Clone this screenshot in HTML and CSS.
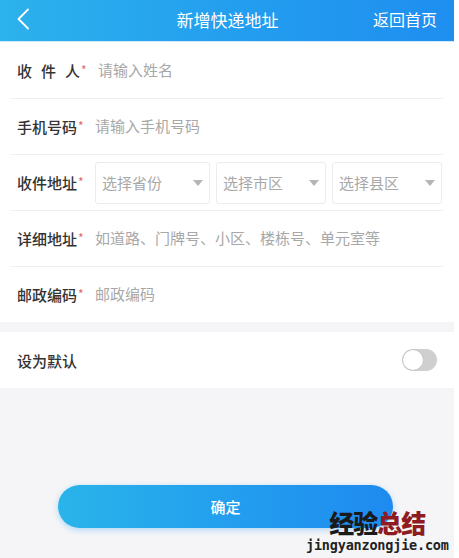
FILE: index.html
```html
<!DOCTYPE html>
<html lang="zh-CN">
<head>
    <meta charset="UTF-8">
    <meta name="viewport" content="width=device-width, initial-scale=1.0">
    <title>新增快递地址</title>
    <link rel="stylesheet" href="styles.css">
</head>
<body>
    <div class="page">
        <header class="topbar">
            <a class="back" href="#">
                <svg width="14" height="22" viewBox="0 0 14 22"><path d="M12 1.5L2.5 11 12 20.5" fill="none" stroke="#fff" stroke-width="1.8" stroke-linecap="round" stroke-linejoin="round"/></svg>
            </a>
            <h1 class="title">新增快递地址</h1>
            <a class="home" href="#">返回首页</a>
        </header>

        <form class="form">
            <div class="row first">
                <label class="label spaced">收件<span class="tight">人</span><i>*</i></label>
                <input class="field" type="text" placeholder="请输入姓名">
            </div>
            <div class="row">
                <label class="label">手机号码<i>*</i></label>
                <input class="field" type="text" placeholder="请输入手机号码">
            </div>
            <div class="row">
                <label class="label">收件地址<i>*</i></label>
                <div class="selects">
                    <div class="select sel-1">选择省份<span class="caret"></span></div>
                    <div class="select sel-2">选择市区<span class="caret"></span></div>
                    <div class="select sel-3">选择县区<span class="caret"></span></div>
                </div>
            </div>
            <div class="row">
                <label class="label">详细地址<i>*</i></label>
                <input class="field" type="text" placeholder="如道路、门牌号、小区、楼栋号、单元室等">
            </div>
            <div class="row last">
                <label class="label">邮政编码<i>*</i></label>
                <input class="field" type="text" placeholder="邮政编码">
            </div>
        </form>

        <div class="default-row">
            <span>设为默认</span>
            <span class="switch"><span class="knob"></span></span>
        </div>

        <div class="actions">
            <button class="submit" type="button">确定</button>
        </div>

        <div class="mark">
            <div class="mark-cn"><b>经验</b><em>总结</em></div>
            <div class="mark-en">jingyanzongjie.com</div>
        </div>
    </div>
</body>
</html>
```

FILE: styles.css
```css
html {
    background: #fff;
}
body {
    margin: 0;
    font-family: "Noto Sans CJK SC", "Noto Sans", sans-serif;
    color: #333;
}
.page {
    position: relative;
    width: 454px;
    min-height: 558px;
    background-color: #f5f5f7;
    overflow: hidden;
}
.topbar {
    height: 41px;
    display: flex;
    align-items: center;
    padding: 0 17px 0 16px;
    background: linear-gradient(90deg, #2cb2ec 0%, #239def 55%, #1f8ef0 100%);
    border-bottom: 1px solid #cfe9fb;
    color: #fff;
}
.back {
    width: 60px;
    display: flex;
    align-items: center;
    margin-top: -4px;
}
.title {
    flex: 1;
    margin: 0 0 3px;
    text-align: center;
    font-size: 17px;
    font-weight: normal;
    padding-left: 6px;
}
.home {
    color: #fff;
    text-decoration: none;
    font-size: 16px;
    margin-bottom: 3px;
}
.form {
    background: #fff;
    padding: 0 11px 0 10px;
}
.row {
    height: 55px;
    display: flex;
    align-items: center;
    border-bottom: 1px solid #f0f0f0;
    padding-left: 7px;
}
.row.first {
    height: 56px;
}
.row.last {
    border-bottom: none;
    height: 55px;
}
.label {
    width: 78px;
    flex-shrink: 0;
    font-size: 15px;
    font-weight: 500;
    color: #333;
}
.label.spaced {
    letter-spacing: 9px;
}
.label .tight {
    letter-spacing: 0;
}
.label i {
    font-style: normal;
    font-weight: normal;
    color: #e06a6a;
    font-size: 12px;
    letter-spacing: 0;
    vertical-align: 2px;
    margin-left: 1px;
}
.field {
    flex: 1;
    min-width: 0;
    border: none;
    outline: none;
    font-family: inherit;
    font-size: 15px;
    color: #333;
    padding: 0;
    margin-bottom: 2px;
}
.row.first .field {
    margin-left: 3px;
}
.field::placeholder {
    color: #a8a8a8;
}
.selects {
    display: flex;
    gap: 6px;
}
.select {
    height: 42px;
    box-sizing: border-box;
    border: 1px solid #ececec;
    border-radius: 3px;
    display: flex;
    align-items: center;
    justify-content: space-between;
    padding: 0 6px;
    font-size: 15px;
    color: #a8a8a8;
}
.sel-1 { width: 115px; }
.sel-2 { width: 110px; }
.sel-3 { width: 110px; }
.caret {
    width: 0;
    height: 0;
    border-left: 5px solid transparent;
    border-right: 5px solid transparent;
    border-top: 6px solid #b5b5b5;
}
.default-row {
    margin-top: 10px;
    height: 56px;
    background: #fff;
    display: flex;
    align-items: center;
    justify-content: space-between;
    padding: 0 17px;
    font-size: 15px;
    font-weight: 500;
    color: #333;
}
.switch {
    width: 35px;
    height: 22px;
    border-radius: 11px;
    background: #cfcfcf;
    display: flex;
    align-items: center;
    padding-left: 1px;
    box-sizing: border-box;
}
.knob {
    width: 20px;
    height: 20px;
    border-radius: 50%;
    background: #fff;
    box-shadow: 0 0 1px rgba(0, 0, 0, 0.2);
}
.actions {
    padding: 97px 0 0 58px;
}
.submit {
    width: 335px;
    height: 43px;
    border: none;
    border-radius: 22px;
    background: linear-gradient(90deg, #2ab4ea 0%, #239fee 50%, #1e8af0 100%);
    box-shadow: 0 2px 6px rgba(40, 160, 240, 0.35);
    color: #fff;
    font-family: inherit;
    font-size: 15px;
    font-weight: 500;
    cursor: pointer;
}
.mark {
    position: absolute;
    left: 306px;
    top: 509px;
    text-align: center;
}
.mark-cn {
    font-size: 25px;
    font-weight: 900;
    line-height: 26px;
    letter-spacing: -1px;
}
.mark-cn b {
    font-weight: 900;
    color: #1a1a1a;
}
.mark-cn em {
    font-style: normal;
    color: #8e1b22;
}
.mark-en {
    margin-top: 3px;
    font-family: "DejaVu Sans Mono", monospace;
    font-weight: bold;
    font-size: 13.5px;
    line-height: 15px;
    color: #222;
    letter-spacing: -0.2px;
}
```
